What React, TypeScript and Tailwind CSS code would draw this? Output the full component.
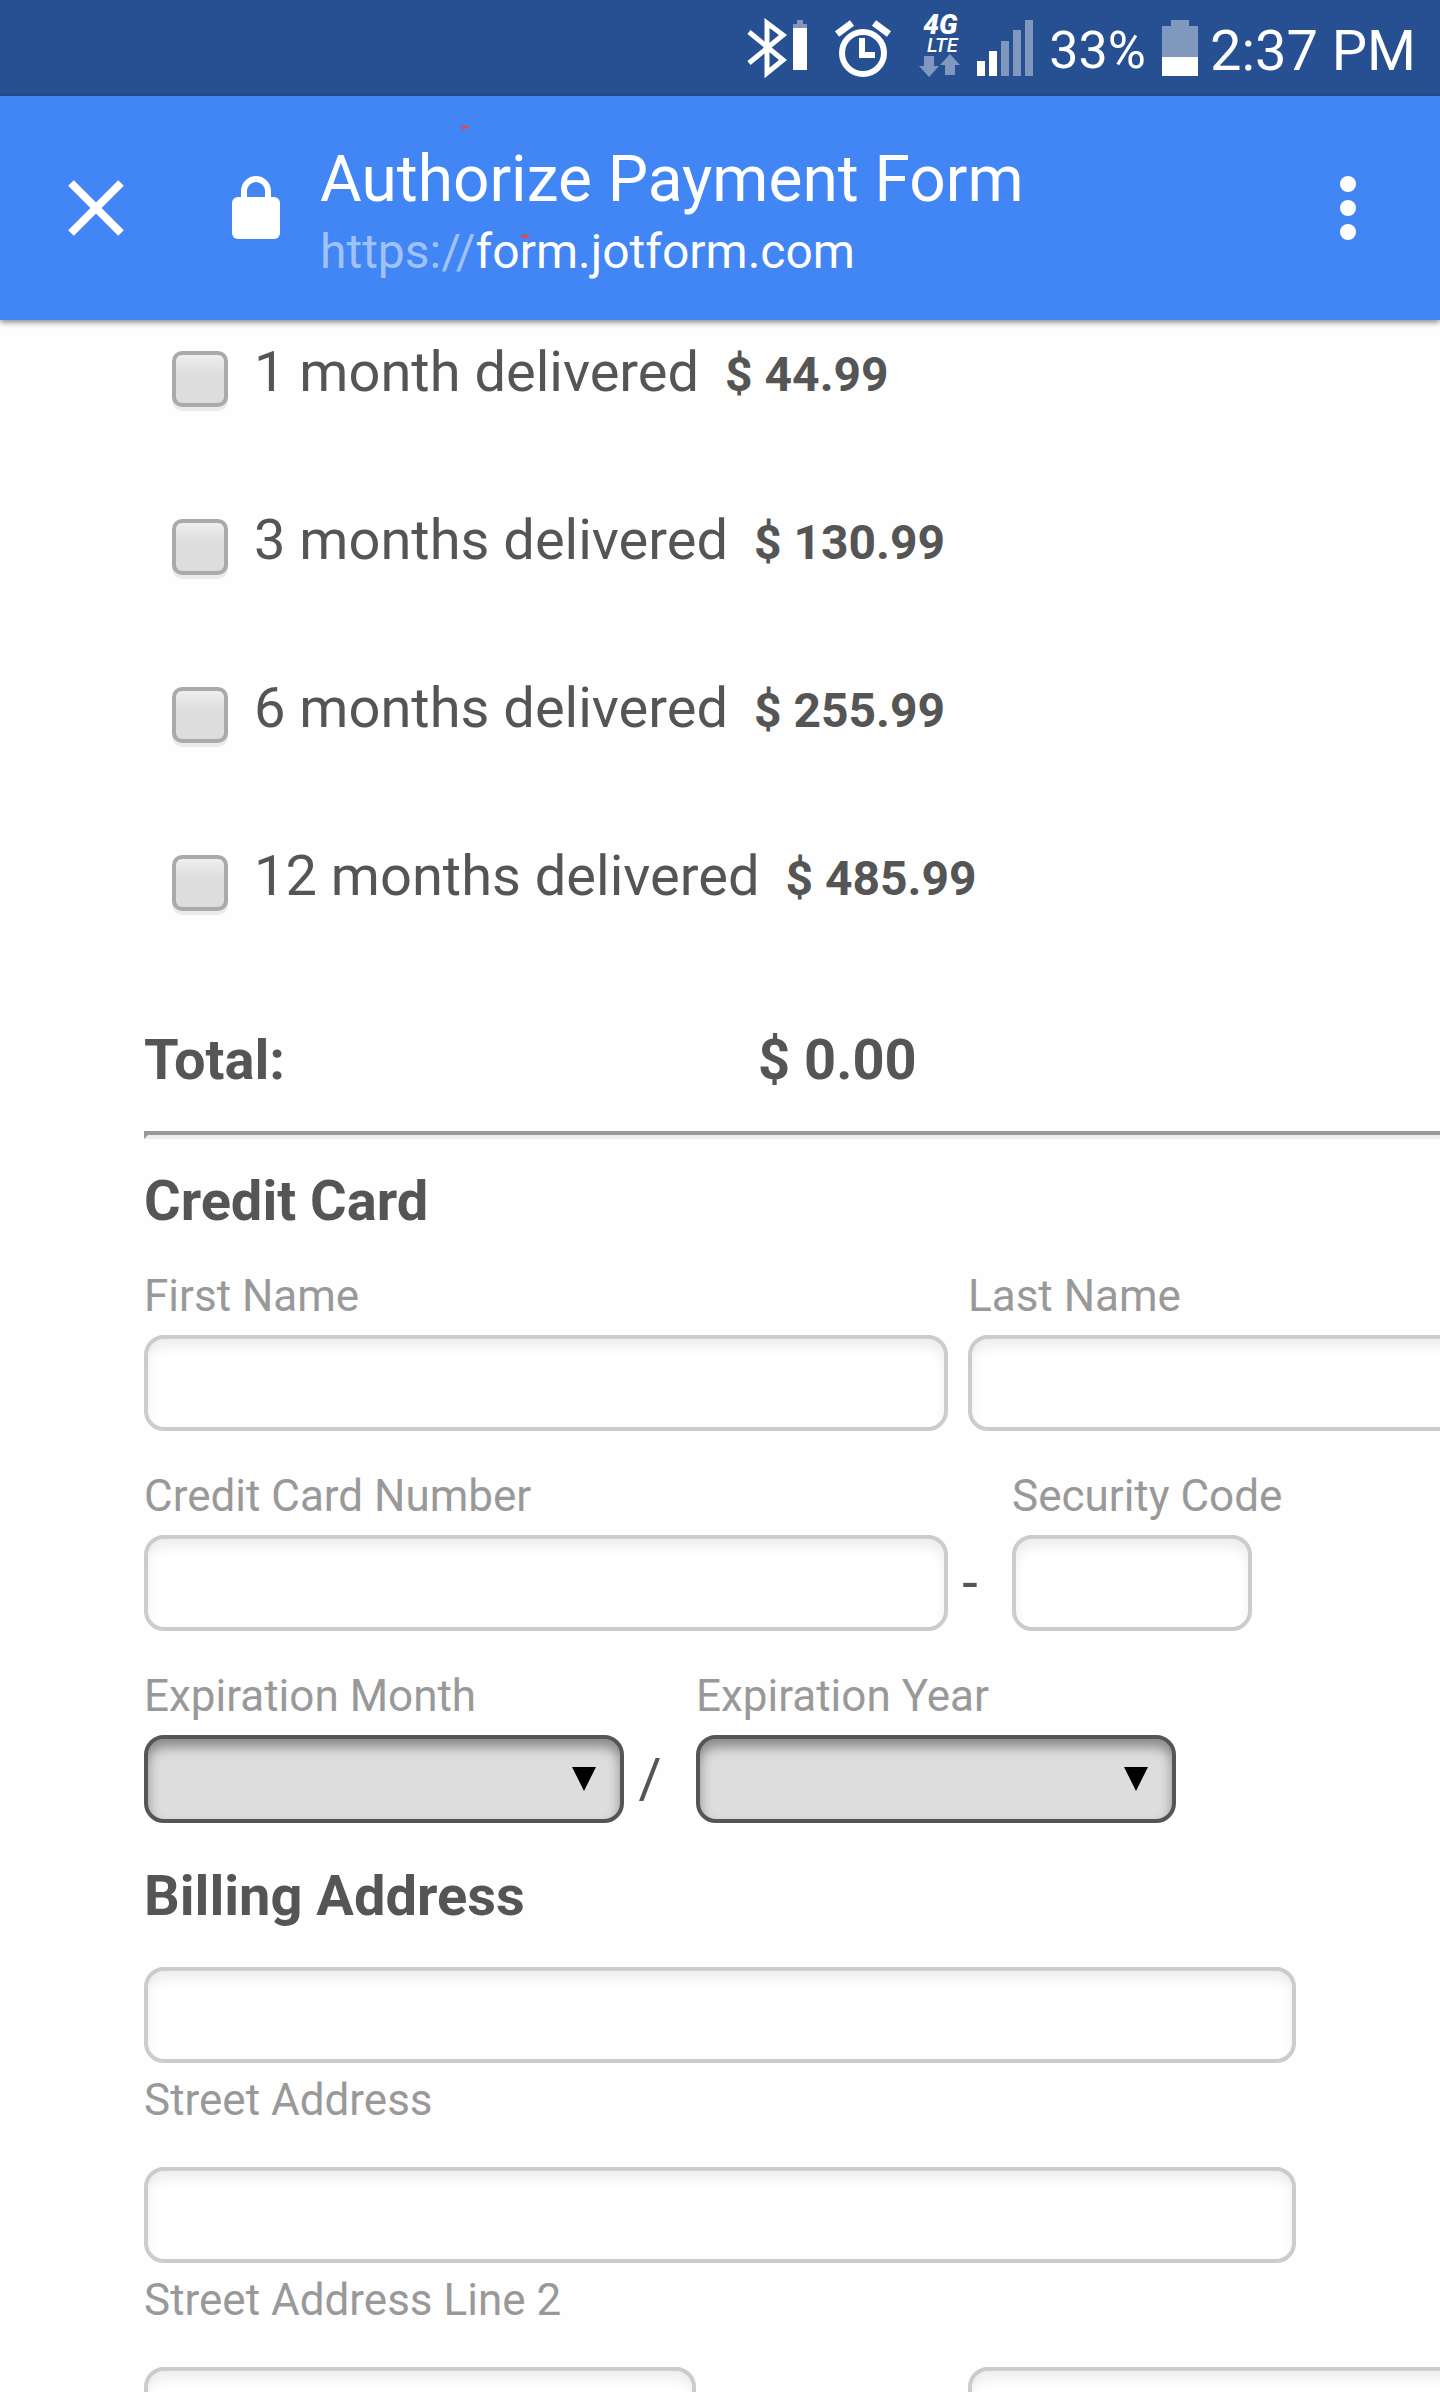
import React, { useState } from "react";

const plans = [
    { id: "plan-1", name: "1 month delivered", price: 44.99 },
    { id: "plan-3", name: "3 months delivered", price: 130.99 },
    { id: "plan-6", name: "6 months delivered", price: 255.99 },
    { id: "plan-12", name: "12 months delivered", price: 485.99 },
];

const months = ["01", "02", "03", "04", "05", "06", "07", "08", "09", "10", "11", "12"];
const years = ["2016", "2017", "2018", "2019", "2020", "2021", "2022"];

const inputStyle =
    "h-24 rounded-[20px] border-4 border-[#ccc] bg-white px-5 text-[44px] shadow-[inset_0_8px_12px_rgba(0,0,0,0.07)]";

const StatusBar: React.FC = () => (
    <div className="flex h-24 items-center justify-end bg-[#275092] pr-6 text-white">
        {/* Bluetooth + device battery */}
        <svg width="60" height="60" viewBox="0 0 60 60" className="mr-7" aria-hidden="true">
            <path
                d="M2 14L36 42L20 55V5L36 17L2 45"
                fill="none"
                stroke="#fff"
                strokeWidth="5"
            />
            <path d="M46 10h14v-4h-4v-4h-6v4h-4z" fill="#8097be" />
            <path d="M46 10h14v42h-14z" fill="#fff" />
        </svg>

        {/* Alarm */}
        <svg width="56" height="58" viewBox="0 0 56 58" className="mr-7" aria-hidden="true">
            <circle cx="28" cy="34" r="21" fill="none" stroke="#fff" strokeWidth="6" />
            <path d="M27 19v17h13" fill="none" stroke="#fff" strokeWidth="6" />
            <path d="M2 15L17 4M54 15L39 4" stroke="#fff" strokeWidth="7" />
        </svg>

        {/* Network */}
        <div className="mr-4 mb-1.5 flex flex-col items-center italic">
            <span className="text-[28px] leading-6 font-black">4G</span>
            <span className="pl-1 text-xl leading-4 font-medium">LTE</span>
            <svg width="42" height="23" viewBox="0 0 42 23" fill="#8097be" className="mt-px" aria-hidden="true">
                <path d="M5 2h10v10h5L10 23L0 12h5z" />
                <path d="M26 21h10v-10h5L31 0L21 11h5z" />
            </svg>
        </div>

        {/* Signal */}
        <svg width="56" height="56" viewBox="0 0 56 56" className="mr-4" aria-hidden="true">
            <path d="M0 41h8v15h-8zM12 31h8v25h-8z" fill="#fff" />
            <path d="M24 21h8v35h-8zM36 10h8v46h-8zM48 0h8v56h-8z" fill="#8097be" />
        </svg>

        <span className="mr-4 pt-1.5 text-[52px] leading-none">33%</span>

        <svg width="36" height="56" viewBox="0 0 36 56" className="mr-3" aria-hidden="true">
            <path d="M0 37V6h9V0h18v6h9v31z" fill="#8097be" />
            <path d="M0 37h36v19H0z" fill="#fff" />
        </svg>

        <span className="pt-1.5 text-[56px] leading-none">2:37 PM</span>
    </div>
);

const BrowserBar: React.FC = () => (
    <header className="relative z-10 flex h-56 items-center bg-[#4285f4] text-white shadow-[0_2px_6px_rgba(0,0,0,0.5)]">
        <button type="button" aria-label="Close" className="ml-[68px]">
            <svg width="56" height="56" viewBox="0 0 56 56">
                <path d="M3 3L53 53M53 3L3 53" stroke="#fff" strokeWidth="8" />
            </svg>
        </button>
        <svg width="48" height="64" viewBox="0 0 48 64" className="ml-[108px]" aria-hidden="true">
            <rect y="21" width="48" height="42" rx="6" fill="#fff" />
            <path d="M12 23V15a12 12 0 0 1 24 0v8" fill="none" stroke="#fff" strokeWidth="6" />
        </svg>
        <div className="ml-10 flex-1 pt-3">
            <h1 className="text-[64px] leading-[76px]">Authorize Payment Form</h1>
            <a href="#form" className="block text-[48px] leading-[68px]">
                <span className="text-[#a0c2fa]">https://</span>form.jotform.com
            </a>
        </div>
        <button type="button" aria-label="More options" className="mr-[84px]">
            <svg width="16" height="64" viewBox="0 0 16 64" fill="#fff">
                <circle cx="8" cy="8" r="8" />
                <circle cx="8" cy="32" r="8" />
                <circle cx="8" cy="56" r="8" />
            </svg>
        </button>
        <svg
            width="80"
            height="130"
            viewBox="0 0 80 130"
            fill="#f44336"
            className="pointer-events-none absolute top-6 left-[460px]"
            aria-hidden="true"
        >
            <path d="M2 6h7l-1 2l-4 1l-1 1h-1z" />
            <path d="M60 114l3 1h6v2l-4 1l-1 1z" />
        </svg>
    </header>
);

type FieldProps = {
    id: string;
    label: string;
    className: string;
    labelBelow?: boolean;
};

const TextField: React.FC<FieldProps> = ({ id, label, className, labelBelow }) => (
    <div className={`flex shrink-0 ${labelBelow ? "flex-col-reverse gap-[10px]" : "flex-col gap-3"} ${className}`}>
        <label htmlFor={id} className="text-[44px] leading-[54px] whitespace-nowrap text-[#999]">
            {label}
        </label>
        <input id={id} type="text" className={`w-full ${inputStyle}`} />
    </div>
);

const SelectField: React.FC<{ id: string; label: string; options: string[] }> = ({ id, label, options }) => (
    <div className="flex w-[480px] shrink-0 flex-col gap-3">
        <label htmlFor={id} className="text-[44px] leading-[54px] whitespace-nowrap text-[#999]">
            {label}
        </label>
        <div className="relative">
            <select
                id={id}
                defaultValue=""
                className="block h-[88px] w-full appearance-none rounded-[20px] border-4 border-[#555] bg-[#ddd] px-5 text-[44px] shadow-[inset_0_8px_12px_rgba(0,0,0,0.38)]"
            >
                <option value=""></option>
                {options.map((option) => (
                    <option key={option} value={option}>
                        {option}
                    </option>
                ))}
            </select>
            <svg
                width="24"
                height="24"
                viewBox="0 0 24 24"
                className="pointer-events-none absolute top-8 right-7"
                aria-hidden="true"
            >
                <path d="M0 0h24L12 24z" fill="#000" />
            </svg>
        </div>
    </div>
);

const App: React.FC = () => {
    const [selected, setSelected] = useState<string[]>([]);

    const toggle = (id: string) => {
        setSelected(selected.includes(id) ? selected.filter((s) => s !== id) : [...selected, id]);
    };

    const total = plans.filter((p) => selected.includes(p.id)).reduce((sum, p) => sum + p.price, 0);

    return (
        <div className="flex h-screen flex-col overflow-hidden bg-[#fefefe] font-[Roboto,sans-serif] text-[#555]">
            <StatusBar />
            <BrowserBar />

            <form id="form" className="flex-1 overflow-hidden pt-5 pl-36">
                {/* Plans */}
                <div className="flex flex-col gap-[101px] pl-7">
                    {plans.map((plan) => (
                        <div key={plan.id} className="flex items-baseline">
                            <input
                                id={plan.id}
                                type="checkbox"
                                checked={selected.includes(plan.id)}
                                onChange={() => toggle(plan.id)}
                                className="mt-[11px] size-14 appearance-none self-start rounded-[10px] border-4 border-[#aaa] bg-linear-to-b from-[#eee] to-[#ddd] to-40% shadow-[0_4px_0_#ebebeb] checked:bg-[#999]"
                            />
                            <label htmlFor={plan.id} className="ml-[26px] flex items-baseline gap-[26px] text-[56px] leading-[64px]">
                                {plan.name}
                                <b className="text-[48px]">$ {plan.price}</b>
                            </label>
                        </div>
                    ))}
                </div>

                {/* Total */}
                <div className="mt-[117px] flex text-[56px] leading-[64px] font-bold">
                    <span className="w-[614px]">Total:</span>
                    <span>$ {total.toFixed(2)}</span>
                </div>

                <hr className="mt-[39px] h-2 border-4 border-r-0 border-t-[#999] border-b-[#eee] border-l-[#999]" />

                {/* Card */}
                <h2 className="mt-[30px] text-[56px] leading-[64px] font-bold">Credit Card</h2>
                <div className="mt-9 flex flex-col gap-[38px]">
                    <div className="flex gap-5">
                        <TextField id="first" label="First Name" className="w-[804px]" />
                        <TextField id="last" label="Last Name" className="w-[804px]" />
                    </div>
                    <div className="flex">
                        <TextField id="number" label="Credit Card Number" className="w-[804px]" />
                        <span className="w-16 self-end pr-5 text-center text-[56px] leading-[96px]">-</span>
                        <TextField id="code" label="Security Code" className="w-60" />
                    </div>
                    <div className="flex">
                        <SelectField id="month" label="Expiration Month" options={months} />
                        <span className="w-[72px] self-end pr-5 text-center text-[56px] leading-[88px]">/</span>
                        <SelectField id="year" label="Expiration Year" options={years} />
                    </div>
                </div>

                {/* Address */}
                <h2 className="mt-[41px] text-[56px] leading-[64px] font-bold">Billing Address</h2>
                <div className="mt-[39px] flex flex-col gap-10">
                    <TextField id="street" label="Street Address" className="w-[1152px]" labelBelow />
                    <TextField id="street2" label="Street Address Line 2" className="w-[1152px]" labelBelow />
                    <div className="flex gap-[272px]">
                        <input type="text" aria-label="City" className={`w-[552px] shrink-0 ${inputStyle}`} />
                        <input type="text" aria-label="State" className={`w-[552px] shrink-0 ${inputStyle}`} />
                    </div>
                </div>
            </form>
        </div>
    );
};

export default App;
